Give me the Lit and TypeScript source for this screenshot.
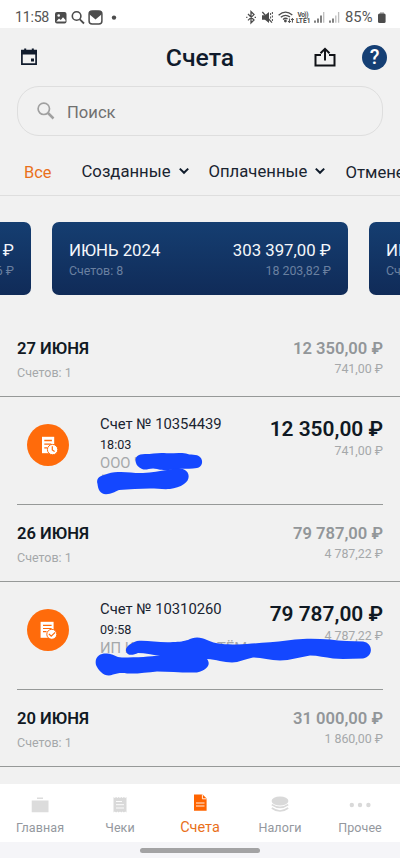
import { LitElement, html, css, svg } from "lit";
import { customElement, property } from "lit/decorators.js";

interface Invoice {
  number: string;
  time: string;
  client: string;
  amount: string;
  fee: string;
  status: "pending" | "paid";
}

interface Day {
  date: string;
  count: number;
  amount: string;
  fee: string;
  invoice?: Invoice;
}

const days: Day[] = [
  {
    date: "27 ИЮНЯ", count: 1, amount: "12 350,00 ₽", fee: "741,00 ₽",
    invoice: { number: "10354439", time: "18:03", client: "ООО '", amount: "12 350,00 ₽", fee: "741,00 ₽", status: "pending" },
  },
  {
    date: "26 ИЮНЯ", count: 1, amount: "79 787,00 ₽", fee: "4 787,22 ₽",
    invoice: { number: "10310260", time: "09:58", client: "ИП К", amount: "79 787,00 ₽", fee: "4 787,22 ₽", status: "paid" },
  },
  { date: "20 ИЮНЯ", count: 1, amount: "31 000,00 ₽", fee: "1 860,00 ₽" },
];

const chevron = html`<svg width="12" height="8" viewBox="0 0 12 8"><path d="M1.8 1.6 6 5.8 10.2 1.6" fill="none" stroke="#101c2b" stroke-width="2"/></svg>`;

@customElement("status-bar")
class StatusBar extends LitElement {
  static styles = css`
    :host { display: flex; height: 28px; background: #fff; color: #555; box-sizing: border-box; padding: 7px 13px 0 15px; justify-content: space-between; }
    .side { display: flex; height: 21px; align-items: center; }
    .time { font-size: 14.2px; line-height: 21px; width: 39px; letter-spacing: -0.25px; }
    .battery { font-size: 14.8px; line-height: 21px; width: 31px; letter-spacing: 0; }
    svg { display: block; }
  `;
  render() {
    return html`
      <div class="side">
        <span class="time">11:58</span>
        <svg width="70" height="21" viewBox="54 7 70 21">
          <rect x="55" y="12" width="11.5" height="11.5" rx="2" fill="#4c4c4c"/>
          <circle cx="58.7" cy="15.5" r="1.3" fill="#fff"/>
          <path d="M56.3 21.5 59 18.5 60.8 19.9 63 17.2 65.5 20V21.5Z" fill="#fff"/>
          <circle cx="76.6" cy="16" r="4.3" fill="none" stroke="#4c4c4c" stroke-width="1.6"/>
          <path d="M79.8 19.4 84 23.5" stroke="#4c4c4c" stroke-width="1.8"/>
          <rect x="89.1" y="11" width="12.8" height="13" rx="3" fill="#fff" stroke="#4c4c4c" stroke-width="1.5"/>
          <path d="M89.3 12 Q95.5 9.5 101.8 12 L102 14 95.5 19.5 89 14Z" fill="#4c4c4c"/>
          <circle cx="114" cy="17.6" r="2.2" fill="#4c4c4c"/>
        </svg>
      </div>
      <div class="side">
        <svg width="100" height="21" viewBox="245 7 100 21">
          <path d="M248 14 254 20 251 23V11.6L254 14.6 248 20.4M246.2 17.3h1.2M254.6 17.3h1.4" fill="none" stroke="#4c4c4c" stroke-width="1.3"/>
          <path d="M262 15.2h3l4-3.2v11l-4-3.2h-3Z" fill="#4c4c4c"/>
          <path d="M262.3 12 272 22.6" stroke="#4c4c4c" stroke-width="1.3"/>
          <path d="M270.6 13v2M270.6 16.5v2M272.4 12v2M272.4 15.5v2M272.4 19v2" stroke="#4c4c4c" stroke-width="1"/>
          <path d="M278.6 15.2Q285.5 9.2 292.3 15M280.8 17.3Q285.5 13.4 290 17.1M283 19.4Q285.5 17.4 287.6 19" fill="none" stroke="#4c4c4c" stroke-width="1.3"/>
          <circle cx="285.4" cy="21" r="1.4" fill="#4c4c4c"/>
          <path d="M289.4 18.5v4M288 21l1.4 1.6 1.4-1.6M292.4 22.6v-4M291 20l1.4-1.6 1.4 1.6" fill="none" stroke="#4c4c4c" stroke-width="1"/>
          <text x="297.5" y="16.8" font-size="6.6" font-weight="700" fill="#4c4c4c" textLength="11">Vo))</text>
          <text x="296" y="23.2" font-size="6.6" font-weight="700" fill="#4c4c4c" textLength="14.5">LTE1</text>
          <path d="M315 20.5v2.2M318 18.5v4.2M321 15.5v7.2" stroke="#4c4c4c" stroke-width="1.4"/>
          <path d="M323.7 12v10.7" stroke="#bdbdbd" stroke-width="1.3"/>
          <path d="M330 20.5v2.2M333 18.5v4.2" stroke="#4c4c4c" stroke-width="1.4"/>
          <path d="M335.8 15.5v7.2M338.6 12v10.7" stroke="#bdbdbd" stroke-width="1.3"/>
        </svg>
        <span class="battery">85%</span>
        <svg width="11" height="21" viewBox="376 7 11 21">
          <path d="M380 12h4v2h-4z" fill="#c4c4c4"/><rect x="378" y="13.6" width="7.6" height="9.4" rx="1.5" fill="#4c4c4c"/>
        </svg>
      </div>`;
  }
}

@customElement("month-card")
class MonthCard extends LitElement {
  @property() month = "";
  @property() count = "";
  @property() amount = "";
  @property() fee = "";
  static styles = css`
    :host { display: flex; justify-content: space-between; flex: 0 0 296px; height: 73px; box-sizing: border-box; border-radius: 7px;
      padding: 18px 17px 0; background: linear-gradient(#153e71, #102b58); color: #f4f7fb; }
    .col:last-child { text-align: right; }
    .main { font-size: 16.8px; line-height: 21px; white-space: nowrap; }
    .sub { font-size: 12.4px; line-height: 19px; color: #6a80a0; white-space: nowrap; }
  `;
  render() {
    return html`
      <div class="col"><div class="main">${this.month}</div><div class="sub">Счетов: ${this.count}</div></div>
      <div class="col"><div class="main">${this.amount}</div><div class="sub">${this.fee}</div></div>`;
  }
}

@customElement("day-header")
class DayHeader extends LitElement {
  @property({ attribute: false }) day!: Day;
  static styles = css`
    :host { display: flex; justify-content: space-between; height: 77px; box-sizing: border-box; padding: 18px 17px 0; border-bottom: 1px solid #969998; }
    .right { text-align: right; }
    .date, .amount { font-size: 16.6px; line-height: 21px; font-weight: 600; color: #101923; }
    .amount { color: #929699; }
    .count { font-size: 12.5px; line-height: 19px; margin-top: 4px; color: #a5a8aa; }
    .fee { font-size: 12.4px; line-height: 19px; color: #a5a8aa; }
  `;
  render() {
    const d = this.day;
    return html`
      <div><div class="date">${d.date}</div><div class="count">Счетов: ${d.count}</div></div>
      <div class="right"><div class="amount">${d.amount}</div><div class="fee">${d.fee}</div></div>`;
  }
}

@customElement("invoice-row")
class InvoiceRow extends LitElement {
  @property({ attribute: false }) invoice!: Invoice;
  static styles = css`
    :host { display: flex; height: 108px; box-sizing: border-box; margin: 0 17px; padding-left: 10px; border-bottom: 1px solid #969998; position: relative; }
    .icon { display: block; width: 42px; height: 42px; margin-top: 27px; }
    .info { margin: 17px 0 0 31px; flex: 1; white-space: nowrap; }
    .number { font-size: 14.8px; line-height: 21px; color: #1a2430; }
    .time { font-size: 12.6px; line-height: 20px; color: #1a2430; }
    .client { font-size: 14.8px; line-height: 18px; margin-top: -1px; color: #a5a8aa; }
    .sum { text-align: right; margin-top: 19px; white-space: nowrap; }
    .amount { font-size: 20.9px; line-height: 26px; font-weight: 600; color: #101923; }
    .fee { font-size: 12.4px; line-height: 19px; margin-top: -1px; color: #a5a8aa; }
    .marker { position: absolute; left: -17px; top: 0; pointer-events: none; }
    .hint { position: absolute; left: 200px; top: 57px; font-size: 14.8px; line-height: 18px; color: #a5a8aa; }
  `;
  render() {
    const i = this.invoice;
    const pending = i.status === "pending";
    return html`
      <svg class="icon" viewBox="0 0 42 42">
        <circle cx="21" cy="21" r="21" fill="#ff6b0b"/>
        ${pending
          ? svg`<path d="M15 12.8h12.2v16.4H15z" fill="#fff"/>
              <path d="M17.3 16.5h7.6M17.3 20.2h7M17.3 23.8h3" stroke="#ff6b0b" stroke-width="1.3"/>
              <circle cx="25.6" cy="25.6" r="5.2" fill="#fff" stroke="#ff6b0b" stroke-width="1"/>
              <path d="M25.3 22.3v3.6l2.3 1.5" fill="none" stroke="#ff6b0b" stroke-width="1.2"/>`
          : svg`<path d="M13.6 12.8h13v16h-13z" fill="#fff"/>
              <path d="M16 16.3h8.6M16 19.5h8.6M16 22.7h3.5" stroke="#ff6b0b" stroke-width="1.2"/>
              <circle cx="24.8" cy="25.3" r="5" fill="#fff" stroke="#ff6b0b" stroke-width="1"/>
              <path d="M21.9 24.9 24.2 27.2 28.2 23.4" fill="none" stroke="#ff6b0b" stroke-width="1.3"/>`}
      </svg>
      <div class="info">
        <div class="number">Счет № ${i.number}</div>
        <div class="time">${i.time}</div>
        <div class="client">${i.client}</div>
      </div>
      <div class="sum"><div class="amount">${i.amount}</div><div class="fee">${i.fee}</div></div>
      ${pending ? "" : html`<span class="hint">ТЁМ</span>`}
      <svg class="marker" width="400" height="108" viewBox="0 0 400 108" fill="#1447ff">
        ${pending
          ? svg`<path d="M102 77.5h5v3h-5z" fill="#b5b7b8"/>
              <path d="M136 66C134 60 138 57 145 57C152 57 158 55.5 164 56C172 57 177 55 186 56.5C190 58.5 197 56.5 200 60C204 64 202 70 197 71C190 72.5 183 71 179 72C170 73 163 74 157 72C150 70 147 74 142 72C138 70 136.5 68 136 66Z"/>
              <path d="M97.5 87C96 82 99 79 104 78C109 76 113 75.3 118 75C127 74.5 135 76.5 143 76C152 75.5 160 74 167 73C173 71.5 180 70.5 184 72.5C190 75 190.5 83 184 87C180 90 175 91 170 92C163 92.5 157 91.5 150 91.5C140 92 129 92 119 93C114 95 112 97 106 97.3C100 97 98 92 97.5 87Z"/>`
          : svg`<path d="M126 69C125 65 131 61 137 59C147 58 160 61 173 60C180 60 184 59 188 58C193 54.5 201 54.5 207 58C215 62 226 62.5 237 62.5C249 62 259 61 270 60.3C282 59.5 292 57.5 303 57C312 56.5 321 57 330 57.5C341 59 352 59 363 59.5C373 61 374 74 363 76.5C353 76.5 343 77.5 333 76.5C325 75.5 318 73.5 310 73.5C300 75 290 78.5 280 78.5C270 78.5 261 75.5 253 75.5C245 77 239 80.5 232 80.5C224 80.5 216 77.5 207 77C211 82 208 88 197 90.5C183 91 170 89.5 157 89.5C147 90.5 137 92 127 91.5C121 90.5 117 91.5 113 92.5C106 96 99 90 96 83C94 74 101 71 107 71.5C113 71.5 116 75.5 122 75.5C138 75.5 150 74.5 160 73.5C152 73 145 71 138 71C133 73.5 127 74 126 69Z"/>`}
      </svg>`;
  }
}

@customElement("tab-bar")
class TabBar extends LitElement {
  static styles = css`
    :host { display: grid; grid-template-columns: repeat(5, 80px); height: 58px; background: #fff; }
    .tab { display: flex; flex-direction: column; align-items: center; font-size: 12.5px; line-height: 18px; color: #94989e; letter-spacing: 0.1px; }
    .tab svg { display: block; margin-top: 8px; margin-bottom: 1px; }
    .active { color: #e9701b; font-size: 14.5px; letter-spacing: 0; }
  `;
  render() {
    return html`
      <div class="tab"><svg width="28" height="26" viewBox="0 0 28 26"><path d="M11 5.5h6v1.5h-6zM5.7 8.5h16.8v11.7H5.7z" fill="#dcdcdc"/></svg>Главная</div>
      <div class="tab"><svg width="28" height="26" viewBox="0 0 28 26"><path d="M7.5 5l1.3 1 1.3-1 1.3 1 1.3-1 1.3 1 1.3-1 1.3 1 1.3-1 1.3 1 1.3-1v15.500l-1.300-1-1.300 1-1.300-1-1.300 1-1.300-1-1.300 1-1.300-1-1.300 1-1.300-1-1.300 1z" fill="#d9d9d9"/><path d="M10 9.5h6M10 12.7h8M10 16h8" stroke="#fff" stroke-width="0.9"/></svg>Чеки</div>
      <div class="tab active"><svg width="28" height="26" viewBox="0 0 28 26"><path d="M8 2.5h8.6l4 4v12.300H8z" fill="#ff6400"/><path d="M16.4 2.5v4.300h4.200M10 11h8.500M10 14h8.500" fill="none" stroke="#fff" stroke-width="0.9"/></svg>Счета</div>
      <div class="tab"><svg width="28" height="26" viewBox="0 0 28 26"><ellipse cx="14" cy="9" rx="8.4" ry="4.5" fill="#d9d9d9"/><path d="M5.8 12.6Q14 18.3 22.2 12.6M5.8 16Q14 22 22.2 16" fill="none" stroke="#d9d9d9" stroke-width="1.7"/></svg>Налоги</div>
      <div class="tab"><svg width="28" height="26" viewBox="0 0 28 26" fill="#d9d9d9"><circle cx="5.8" cy="13" r="2.2"/><circle cx="14" cy="13" r="2.2"/><circle cx="22.4" cy="13" r="2.2"/></svg>Прочее</div>`;
  }
}

@customElement("app-root")
class AppRoot extends LitElement {
  static styles = css`
    :host { display: flex; flex-direction: column; width: 400px; height: 858px; overflow: hidden; background: #f1f1f1; font-family: Roboto, "Noto Sans", sans-serif; }
    svg { display: block; }
    .top { display: grid; grid-template-columns: 1fr auto 1fr; height: 58px; align-items: center; padding: 0 13px; }
    .calendar { margin-left: 7px; }
    .title { font-size: 24.8px; font-weight: 500; line-height: 30px; color: #101b2c; margin-top: 2px; }
    .actions { display: flex; justify-content: flex-end; align-items: center; gap: 25px; }
    .help { width: 25px; height: 25px; border-radius: 50%; background: #153f74; color: #fff; font-size: 20px; font-weight: 500; line-height: 25px; text-align: center; }
    .search { display: flex; align-items: center; height: 50px; box-sizing: border-box; margin: 0 17px; border: 1px solid #dedede; border-radius: 22px; padding-left: 19px; gap: 12px; font-size: 16.6px; color: #707070; }
    .search span { margin-top: 2px; }
    .filters { display: flex; height: 60px; box-sizing: border-box; border-bottom: 1px solid #dedede; padding: 25px 0 0 24px; white-space: nowrap; font-size: 16.7px; line-height: 22px; color: #1a2430; overflow: hidden; }
    .filter { display: flex; align-items: center; flex: none; gap: 7px; height: 22px; }
    .filter svg { margin-top: -2px; }
    .all { color: #e9701b; width: 57.5px; margin-top: 1px; font-size: 16.4px; }
    .created { width: 127px; }
    .paid { width: 137px; }
    .cancelled { margin-top: 1px; }
    .months { display: flex; justify-content: center; gap: 21px; margin-top: 26px; height: 73px; overflow: hidden; }
    .days { margin-top: 25px; height: 464px; overflow: hidden; }
    .home { flex: 1; background: #f5f5f8; display: flex; justify-content: center; padding-top: 6px; }
    .handle { width: 120px; height: 4.5px; border-radius: 3px; background: #a3a3a4; }
  `;
  render() {
    return html`
      <status-bar></status-bar>
      <div class="top">
        <svg class="calendar" width="18" height="20" viewBox="0 0 18 20"><path d="M1.9 3.7h14.2v13.400H1.900z" fill="none" stroke="#101b2c" stroke-width="1.7"/><path d="M1.1 3h15.800v4.500H1.100zM4.200 1.500h2v2h-2zM11.800 1.500h2v2h-2zM11 11.500h3v3h-3z" fill="#101b2c"/></svg>
        <span class="title">Счета</span>
        <div class="actions">
          <svg width="24" height="22" viewBox="0 0 24 22"><path d="M8 9H2.500v10.500h19V9H16M12 14.500V3M7.500 7.300 12 2.800 16.500 7.300" fill="none" stroke="#101217" stroke-width="2"/></svg>
          <span class="help">?</span>
        </div>
      </div>
      <div class="search">
        <svg width="18" height="18" viewBox="0 0 18 18"><circle cx="6.8" cy="6.8" r="5.7" fill="none" stroke="#a0a0a0" stroke-width="1.7"/><path d="M11 11 16.500 16.500" stroke="#a0a0a0" stroke-width="2.5"/></svg>
        <span>Поиск</span>
      </div>
      <div class="filters">
        <span class="filter all">Все</span>
        <span class="filter created">Созданные ${chevron}</span>
        <span class="filter paid">Оплаченные ${chevron}</span>
        <span class="filter cancelled">Отмененные</span>
      </div>
      <div class="months">
        <month-card month="МАЙ 2024" count="6" amount="201 600,00 ₽" fee="12 096,06 ₽"></month-card>
        <month-card month="ИЮНЬ 2024" count="8" amount="303 397,00 ₽" fee="18 203,82 ₽"></month-card>
        <month-card month="ИЮЛЬ 2024" count="4" amount="98 400,00 ₽" fee="5 904,00 ₽"></month-card>
      </div>
      <div class="days">
        ${days.map((day) => html`
          <day-header .day=${day}></day-header>
          ${day.invoice ? html`<invoice-row .invoice=${day.invoice}></invoice-row>` : ""}`)}
      </div>
      <tab-bar></tab-bar>
      <div class="home"><div class="handle"></div></div>`;
  }
}
